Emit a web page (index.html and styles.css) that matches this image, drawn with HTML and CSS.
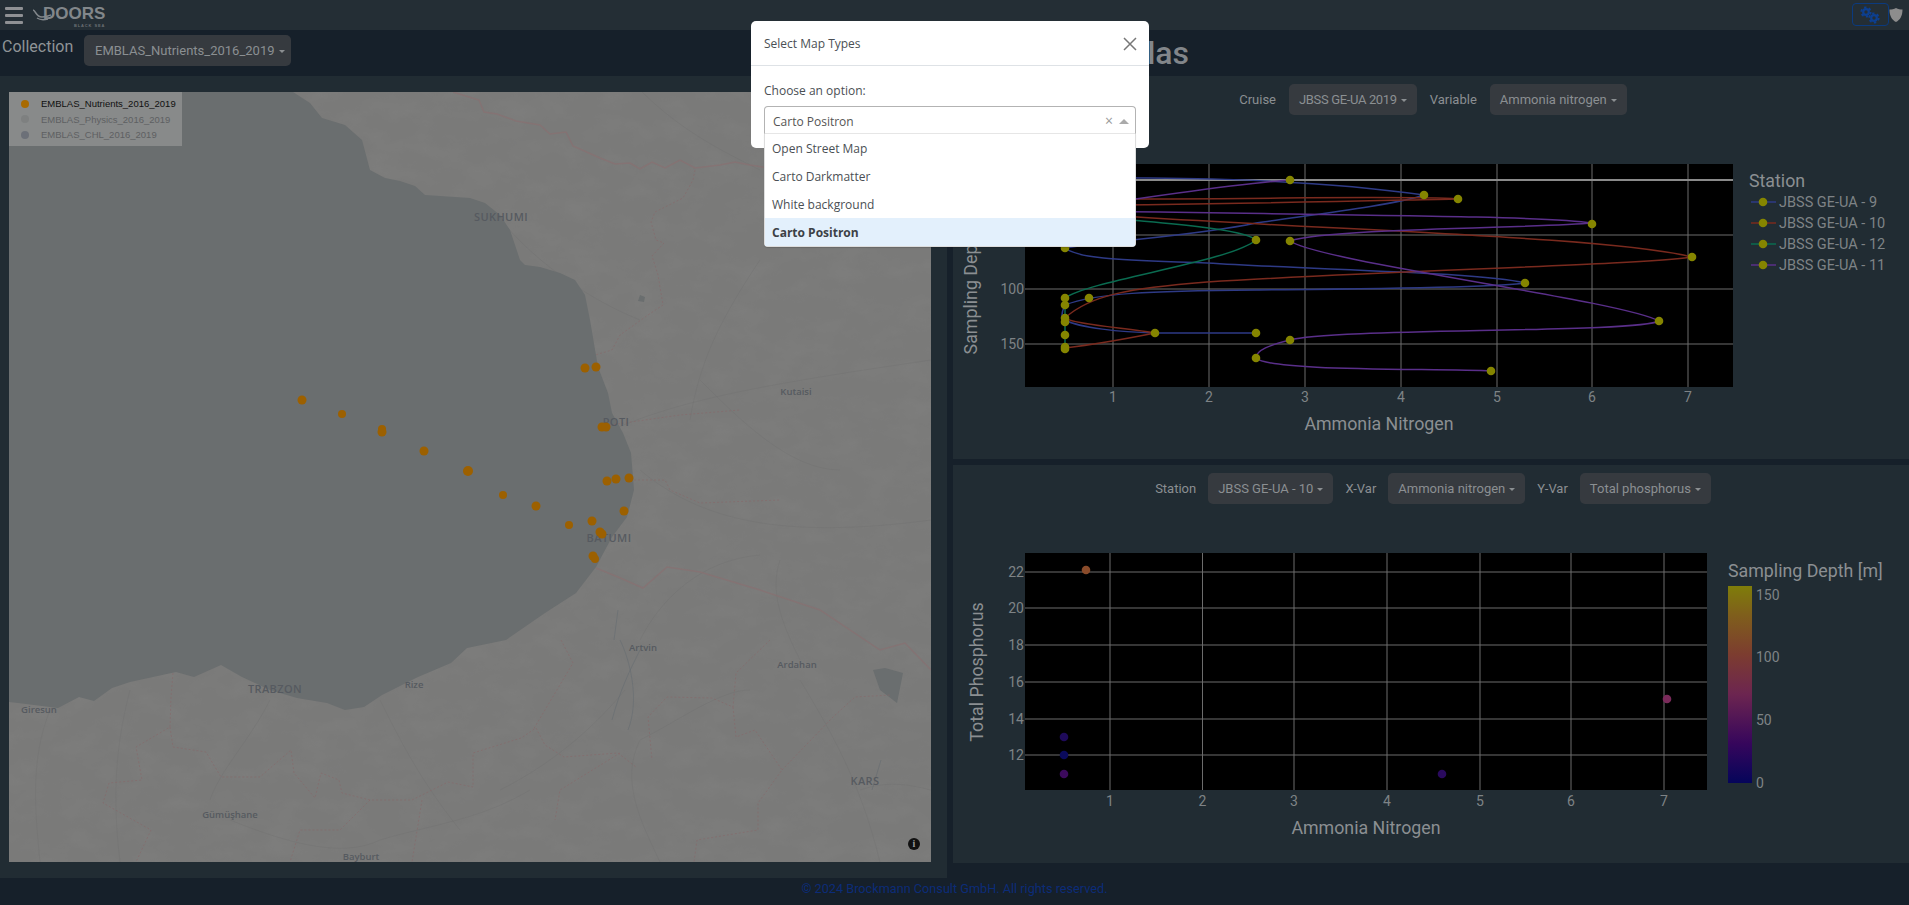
FILE: index.html
```html
<!DOCTYPE html>
<html lang="en">
<head>
<meta charset="utf-8">
<title>DOORS Black Sea</title>
<link rel="stylesheet" href="styles.css">
</head>
<body>
<nav class="navbar">
  <div class="menu-icon"><span></span><span></span><span></span></div>
  <div class="logo">
    <svg class="logo-swoosh" viewBox="0 0 18 14" width="18" height="14"><path d="M0 2 C3 3 3 9 9 9 C12 9 14 8 18 7 M4 10 C7 12 11 12 15 11"/></svg>
    <div class="logo-text"><span class="logo-name">DOORS</span><span class="logo-sub">BLACK SEA</span></div>
  </div>
  <div class="nav-right">
    <button class="gear-btn" aria-label="Settings">
      <svg viewBox="0 0 35 21" width="35" height="21">
        <g class="gear"><circle cx="13" cy="8" r="2.8"/><circle class="teeth" cx="13" cy="8" r="4.6"/></g>
        <g class="gear"><circle cx="21" cy="14" r="2.8"/><circle class="teeth" cx="21" cy="14" r="4.6"/></g>
      </svg>
    </button>
    <svg class="shield" viewBox="0 0 14 16" width="14" height="16"><path d="M7 1 C9 2 11.500 2.500 13.500 2.500 C13.500 9 11 13 7 15 C3 13 .5 9 .5 2.500 C2.500 2.500 5 2 7 1Z"/></svg>
  </div>
</nav>

<header class="page-head">
  <span class="collection-label">Collection</span>
  <button class="dd dd-collection">EMBLAS_Nutrients_2016_2019</button>
  <h2 class="title">Emblas</h2>
</header>

<main class="content">
  <section class="panel panel-map">
    <div class="map">
      <svg class="map-svg" viewBox="9 92 922 770" preserveAspectRatio="none">
        <defs>
          <filter id="terrain" x="0" y="0" width="100%" height="100%">
            <feTurbulence type="fractalNoise" baseFrequency="0.03 0.05" numOctaves="4" seed="7"/>
            <feColorMatrix type="matrix" values="0 0 0 0 .35  0 0 0 0 .35  0 0 0 0 .35  .8 0 0 0 -.3"/>
          </filter>
        </defs>
        <rect class="land" x="9" y="92" width="922" height="770"/>
        <rect class="terrain" x="9" y="92" width="922" height="770" filter="url(#terrain)"/>
        <path class="road" d="M505 225 C540 265 590 300 640 320 M640 90 C680 130 720 150 760 170 M760 260 C720 320 700 360 690 420 M612 430 C680 400 760 385 931 360 M700 380 C740 420 790 470 840 470 M640 470 C700 520 780 540 931 520 M640 640 C660 600 700 560 760 555 M625 690 C600 720 560 760 500 790 M380 700 C400 740 420 780 460 830 M270 700 C250 740 220 770 210 800 M50 710 C30 760 35 810 40 862 M130 690 C120 730 110 780 120 862 M800 660 C780 620 770 590 780 560 M800 680 C830 730 860 780 880 862 M660 862 C640 820 620 780 640 740 C680 720 720 690 750 690 M860 790 C890 780 910 785 931 790 M230 820 C280 840 340 860 380 840 C430 825 480 820 530 790"/>
        <path class="river" d="M618 610 L614 640 M620 640 C630 660 640 700 628 730 M881 760 L872 790 M640 650 C630 670 620 690 612 720"/>
        <path class="sea" d="M9 92 L293 92 L310 103 L322 118 L345 125 L362 140 L370 170 L385 178 L400 181 L415 186 L425 195 L440 196 L470 198 L485 203 L500 215 L510 230 L515 245 L520 260 L525 265 L540 267 L560 273 L575 280 L585 295 L590 320 L598 367 L608 393 L612 413 L623 433 L631 453 L634 490 L627 517 L612 537 L596 567 L576 593 L545 613 L506 640 L467 648 L451 663 L418 677 L382 695 L364 707 L345 710 L327 703 L297 698 L270 690 L242 677 L221 665 L194 677 L176 672 L130 682 L112 688 L94 701 L79 697 L58 708 L18 703 L9 702 Z"/>
        <path class="sea" d="M873 670 L885 668 L903 673 L897 703 L880 690Z M640 295 L645 297 L644 302 L638 301Z"/>
        <path class="border" d="M453 92 L479 100 L484 112 L497 114 L516 121 L540 125 L550 134 L566 132 L573 146 L600 158 L615 164 L630 163 L640 169 L652 162 L665 168 L680 160 L695 168 L720 165 L735 162 L750 165 L781 170 L830 150 L880 140 L931 120"/>
        <path class="border" d="M596 568 L618 577 L643 588 L667 567 L700 572 L760 590 L820 610 L880 650 L905 643 L931 670"/>
        <path class="dashed" d="M695 170 L693 180 L683 198 L655 212 L651 222 L656 240 L664 243 L652 256 L658 275 L663 305 L648 315 L620 335 L612 350 L595 355"/>
        <path class="dashed" d="M634 480 L665 480 L670 490 L700 503 L780 500 M610 425 L680 415 L740 410"/>
        <path class="dashed" d="M173 673 L171 697 L170 727 L136 747 L142 780 L109 783 L103 803 L151 830 L136 862"/>
        <path class="dashed" d="M170 727 L173 747 L206 752 L221 777 L260 777 L291 750 L294 773 L315 798 L321 773 L339 780 L342 793 L370 800 L412 800 L448 782 L473 787 L473 753 L521 738 L536 728 L545 745 L564 757 L618 753 L636 767"/>
        <path class="dashed" d="M561 640 L573 663 L533 730 M370 800 L340 830 L300 830 L290 862 M422 800 L412 862 M620 753 L560 790 L555 820"/>
        <path class="dashed" d="M770 640 L736 673 L733 707 L712 698 L667 697 L648 717 L652 760 M733 707 L736 737 L755 730 L782 770 L758 803 L758 830 L697 840 L694 862 M782 770 L833 717 L855 697 L891 695"/>
        <g class="map-label">
          <text class="label-big" x="501" y="221">SUKHUMI</text>
          <text class="label-big" x="616" y="426">POTI</text>
          <text class="label-big" x="609" y="542">BATUMI</text>
          <text class="label-big" x="275" y="693">TRABZON</text>
          <text class="label-big" x="865" y="785">KARS</text>
          <text x="796" y="395">Kutaisi</text>
          <text x="643" y="651">Artvin</text>
          <text x="797" y="668">Ardahan</text>
          <text x="414" y="688">Rize</text>
          <text x="39" y="713">Giresun</text>
          <text x="230" y="818">Gümüşhane</text>
          <text x="361" y="860">Bayburt</text>
        </g>
        <g class="station">
          <circle cx="585" cy="368" r="4.5"/><circle cx="596" cy="367" r="4.5"/><circle cx="302" cy="400" r="4.5"/>
          <circle cx="342" cy="414" r="4"/><circle cx="382" cy="429" r="4"/><circle cx="382" cy="432" r="4.5"/>
          <circle cx="424" cy="451" r="4.5"/><circle cx="468" cy="471" r="5"/><circle cx="602" cy="427" r="4.5"/>
          <circle cx="606" cy="427" r="4.5"/><circle cx="607" cy="481" r="4.5"/><circle cx="616" cy="479" r="4.5"/>
          <circle cx="629" cy="478" r="4.5"/><circle cx="503" cy="495" r="4"/><circle cx="536" cy="506" r="4.5"/>
          <circle cx="624" cy="511" r="4.5"/><circle cx="592" cy="521" r="4.5"/><circle cx="569" cy="525" r="4"/>
          <circle cx="600" cy="532" r="4.5"/><circle cx="602" cy="534" r="4.5"/><circle cx="593" cy="556" r="4.5"/>
          <circle cx="595" cy="559" r="4"/>
        </g>
      </svg>
      <ul class="map-legend">
        <li class="on"><i class="swatch swatch-nut"></i>EMBLAS_Nutrients_2016_2019</li>
        <li><i class="swatch swatch-phy"></i>EMBLAS_Physics_2016_2019</li>
        <li><i class="swatch swatch-chl"></i>EMBLAS_CHL_2016_2019</li>
      </ul>
      <span class="info-btn">i</span>
    </div>
  </section>

  <div class="right-col">
    <section class="panel panel-top">
      <div class="controls">
        <span>Cruise</span><button class="dd dd-cruise">JBSS GE-UA 2019</button>
        <span>Variable</span><button class="dd">Ammonia nitrogen</button>
      </div>
      <svg class="chart chart-top" viewBox="953 120 956 339" width="956" height="339">
        <rect class="plot-bg" x="1025" y="164" width="708" height="223"/>
        <g class="grid-v">
          <path d="M1113 164V387M1209 164V387M1305 164V387M1401 164V387M1497 164V387M1592 164V387M1688 164V387"/>
        </g>
        <g class="grid-h">
          <path class="zero" d="M1025 180H1733"/>
          <path d="M1025 235H1733M1025 289H1733M1025 344H1733"/>
        </g>
        <path class="ln ln-blue" d="M1030 178 C1150 177 1300 177 1424 195 C1395 205 1310 215 1256 223 C1200 235 1120 240 1065 248 C1080 260 1130 260 1207 263 C1320 270 1480 272 1525 283 C1500 288 1350 289 1256 290 C1150 291 1095 293 1065 305 C1060 315 1062 322 1065 320 C1080 328 1120 332 1155 333 L1256 333"/>
        <path class="ln ln-red" d="M1030 199 C1250 200 1400 195 1458 199 C1400 200 1250 204 1030 206 M1030 210 C1300 230 1600 235 1692 257 C1640 265 1400 270 1207 282 C1130 288 1090 295 1065 318 C1075 325 1130 328 1155 333 C1120 340 1090 345 1065 348"/>
        <path class="ln ln-green" d="M1030 212 C1190 224 1245 230 1256 240 C1230 262 1090 280 1065 298 L1065 348"/>
        <path class="ln ln-purple" d="M1030 215 C1190 190 1260 182 1290 180 M1030 210 C1300 215 1540 215 1592 223 C1540 228 1330 228 1290 241 C1320 262 1620 300 1659 321 C1640 333 1330 328 1290 340 C1270 345 1256 350 1256 358 C1270 372 1440 368 1491 371"/>
        <g class="dots">
          <circle cx="1290" cy="180" r="4.3"/><circle cx="1424" cy="195" r="4.3"/><circle cx="1458" cy="199" r="4.3"/>
          <circle cx="1592" cy="224" r="4.3"/><circle cx="1256" cy="240" r="4.3"/><circle cx="1290" cy="241" r="4.3"/>
          <circle cx="1065" cy="248" r="4.3"/><circle cx="1692" cy="257" r="4.3"/><circle cx="1525" cy="283" r="4.3"/>
          <circle cx="1065" cy="298" r="4.3"/><circle cx="1089" cy="298" r="4.3"/><circle cx="1065" cy="305" r="4.3"/>
          <circle cx="1065" cy="318" r="4.3"/><circle cx="1065" cy="322" r="4.3"/><circle cx="1155" cy="333" r="4.3"/>
          <circle cx="1256" cy="333" r="4.3"/><circle cx="1065" cy="335" r="4.3"/><circle cx="1290" cy="340" r="4.3"/>
          <circle cx="1065" cy="347" r="4.3"/><circle cx="1065" cy="349" r="4.3"/><circle cx="1256" cy="358" r="4.3"/>
          <circle cx="1659" cy="321" r="4.3"/><circle cx="1491" cy="371" r="4.3"/>
        </g>
        <g class="tick tick-x">
          <text x="1113" y="402">1</text><text x="1209" y="402">2</text><text x="1305" y="402">3</text><text x="1401" y="402">4</text><text x="1497" y="402">5</text><text x="1592" y="402">6</text><text x="1688" y="402">7</text>
        </g>
        <g class="tick tick-y">
          <text x="1024" y="294">100</text><text x="1024" y="349">150</text>
        </g>
        <text class="axis-title ta-mid" x="1379" y="430">Ammonia Nitrogen</text>
        <text class="axis-title ta-mid" transform="translate(977 277) rotate(-90)">Sampling Depth [m]</text>
        <text class="axis-title" x="1749" y="187">Station</text>
        <g class="legend-row">
          <path class="ln ln-blue" d="M1751 202H1776"/><circle class="dot" cx="1763" cy="202" r="4.3"/><text x="1779" y="207">JBSS GE-UA - 9</text>
          <path class="ln ln-red" d="M1751 223H1776"/><circle class="dot" cx="1763" cy="223" r="4.3"/><text x="1779" y="228">JBSS GE-UA - 10</text>
          <path class="ln ln-green" d="M1751 244H1776"/><circle class="dot" cx="1763" cy="244" r="4.3"/><text x="1779" y="249">JBSS GE-UA - 12</text>
          <path class="ln ln-purple" d="M1751 265H1776"/><circle class="dot" cx="1763" cy="265" r="4.3"/><text x="1779" y="270">JBSS GE-UA - 11</text>
        </g>
      </svg>
    </section>

    <section class="panel panel-bottom">
      <div class="controls controls-tight">
        <span>Station</span><button class="dd">JBSS GE-UA - 10</button>
        <span>X-Var</span><button class="dd">Ammonia nitrogen</button>
        <span>Y-Var</span><button class="dd">Total phosphorus</button>
      </div>
      <svg class="chart chart-bottom" viewBox="953 509 956 354" width="956" height="354">
        <defs>
          <linearGradient id="cbar" x1="0" y1="1" x2="0" y2="0">
            <stop offset="0" stop-color="#05055a"/>
            <stop offset=".2" stop-color="#36065c"/>
            <stop offset=".45" stop-color="#6c2550"/>
            <stop offset=".65" stop-color="#7c3c30"/>
            <stop offset=".85" stop-color="#7f5e1c"/>
            <stop offset="1" stop-color="#7f7d0a"/>
          </linearGradient>
        </defs>
        <rect class="plot-bg" x="1025" y="553" width="682" height="237"/>
        <g class="grid-v">
          <path d="M1110 553V790M1202.500 553V790M1294 553V790M1387 553V790M1480 553V790M1571 553V790M1664 553V790"/>
        </g>
        <g class="grid-h">
          <path d="M1025 572H1707M1025 608H1707M1025 645H1707M1025 682H1707M1025 719H1707M1025 755H1707"/>
        </g>
        <ellipse class="pt-a" cx="1086" cy="570" rx="4.3" ry="4.3"/>
        <ellipse class="pt-b" cx="1064" cy="737" rx="4.3" ry="4.3"/>
        <ellipse class="pt-c" cx="1064" cy="755" rx="4.3" ry="4.3"/>
        <ellipse class="pt-d" cx="1064" cy="774" rx="4.3" ry="4.3"/>
        <ellipse class="pt-e" cx="1442" cy="774" rx="4.3" ry="4.3"/>
        <ellipse class="pt-f" cx="1667" cy="699" rx="4.3" ry="4.3"/>
        <g class="tick tick-x">
          <text x="1110" y="806">1</text><text x="1202.500" y="806">2</text><text x="1294" y="806">3</text><text x="1387" y="806">4</text><text x="1480" y="806">5</text><text x="1571" y="806">6</text><text x="1664" y="806">7</text>
        </g>
        <g class="tick tick-y">
          <text x="1024" y="577">22</text><text x="1024" y="613">20</text><text x="1024" y="650">18</text><text x="1024" y="687">16</text><text x="1024" y="724">14</text><text x="1024" y="760">12</text>
        </g>
        <text class="axis-title ta-mid" x="1366" y="834">Ammonia Nitrogen</text>
        <text class="axis-title ta-mid" transform="translate(983 672) rotate(-90)">Total Phosphorus</text>
        <text class="axis-title" x="1728" y="577">Sampling Depth [m]</text>
        <rect x="1728" y="586" width="24" height="197" fill="url(#cbar)"/>
        <g class="tick">
          <text x="1756" y="600">150</text><text x="1756" y="662">100</text><text x="1756" y="725">50</text><text x="1756" y="788">0</text>
        </g>
      </svg>
    </section>
  </div>
</main>

<footer class="footer">© 2024 Brockmann Consult GmbH. All rights reserved.</footer>

<div class="modal" role="dialog">
  <div class="modal-head">
    <span>Select Map Types</span>
    <svg class="modal-close" viewBox="0 0 14 14" width="14" height="14"><path d="M1 1L13 13M13 1L1 13"/></svg>
  </div>
  <div class="modal-body">
    <div class="field-label">Choose an option:</div>
    <div class="select">
      <div class="select-value">
        <span>Carto Positron</span>
        <span class="select-clear">×</span>
        <span class="select-arrow"></span>
      </div>
      <ul class="select-menu">
        <li>Open Street Map</li>
        <li>Carto Darkmatter</li>
        <li>White background</li>
        <li class="selected">Carto Positron</li>
      </ul>
    </div>
  </div>
</div>
</body>
</html>
```
FILE: styles.css
```css
* { box-sizing: border-box; }
html, body { margin: 0; padding: 0; }
body {
  width: 1909px;
  height: 905px;
  overflow: hidden;
  position: relative;
  display: flex;
  flex-direction: column;
  background: #16202a;
  font-family: Roboto, "Liberation Sans", sans-serif;
  font-size: 13px;
  color: #8b8f92;
}
button { font: inherit; }

/* navbar */
.navbar {
  height: 30px;
  flex: none;
  background: #242e35;
  display: flex;
  align-items: center;
  padding: 0 6px 0 5px;
}
.menu-icon { width: 18px; display: flex; flex-direction: column; gap: 4px; }
.menu-icon span { height: 3px; background: #8f9194; border-radius: 1px; }
.logo { display: flex; align-items: flex-start; margin-left: 10px; height: 26px; color: #82878b; }
.logo-swoosh { fill: none; stroke: #82878b; stroke-width: 1.500; margin: 6px -8px 0 0; }
.logo-text { display: flex; flex-direction: column; align-items: flex-end; }
.logo-name { font: 700 17px/15px "Liberation Sans", sans-serif; margin-top: 4px; }
.logo-sub { font: 700 4px/5px "Liberation Sans", sans-serif; letter-spacing: .9px; margin-top: 2px; color: #6b7074; }
.nav-right { margin-left: auto; display: flex; align-items: center; gap: 0; }
.gear-btn {
  width: 37px; height: 23px; padding: 0; margin-top: -1px;
  background: none; border: 1px solid #0b3a7e; border-radius: 4px;
  display: flex; align-items: center; justify-content: center;
}
.gear circle { fill: none; stroke: #0d3f8f; stroke-width: 2.200; }
.gear .teeth { stroke-width: 2; stroke-dasharray: 2.4 2.4; }
.shield { fill: #8d8d8d; margin-top: 0; }

/* header */
.page-head {
  height: 46px;
  flex: none;
  display: flex;
  align-items: flex-start;
  padding: 5px 0 0 2px;
}
.collection-label { font-size: 16px; line-height: 24px; color: #8f9497; width: 82px; }
.dd {
  height: 31px;
  padding: 0 10px;
  background: #363a3f;
  color: #8b8f92;
  border: 0;
  border-radius: 5px;
  font-size: 13px;
  white-space: nowrap;
}
.dd::after {
  content: "";
  display: inline-block;
  margin-left: 4px;
  vertical-align: 2px;
  border-top: 3px solid;
  border-left: 3px solid transparent;
  border-right: 3px solid transparent;
}
.dd-collection { width: 207px; padding: 0 0 0 11px; text-align: left; }
.dd-cruise { letter-spacing: -.35px; }
.title { width: 898px; margin: -2px 0 0; text-align: right; font-size: 32px; line-height: 40px; font-weight: 500; color: #82868a; }

/* layout */
.content { flex: 1; display: grid; grid-template-columns: 947px 956px; column-gap: 6px; min-height: 0; }
.panel { background: #212c33; }
.panel-map { padding: 16px 16px 16px 9px; }
.map { position: relative; width: 922px; height: 770px; overflow: hidden; }
.map-svg { display: block; width: 922px; height: 770px; }
.right-col { display: flex; flex-direction: column; gap: 6px; height: 787px; }
.panel-top { height: 383px; }
.panel-bottom { height: 398px; }
.controls { display: flex; justify-content: center; align-items: center; gap: 13px; height: 31px; margin: 8px 0 5px; padding-left: 4px; color: #8b8f92; }
.controls-tight { gap: 12px; }
.chart { display: block; }

/* map */
.land { fill: #7a7a79; }
.terrain { opacity: .22; }
.sea { fill: #6a6e6f; }
.road { fill: none; stroke: #6e6e6e; stroke-width: 1; opacity: .3; }
.river { fill: none; stroke: #626a70; stroke-width: 1; opacity: .5; }
.border { fill: none; stroke: #8a6e70; stroke-width: 1.500; opacity: .6; }
.dashed { fill: none; stroke: #86686a; stroke-width: 1; stroke-dasharray: 2 2; opacity: .65; }
.map-label text { font: 600 9.500px "Open Sans", sans-serif; fill: #565a60; text-anchor: middle; }
.map-label .label-big { font-size: 11px; letter-spacing: .4px; }
.station circle { fill: #9c6000; }
.map-legend {
  position: absolute; left: 0; top: 0; width: 173px; height: 54px;
  margin: 0; padding: 4px 0 0 12px; list-style: none;
  background: #888a8a; color: #5e6062;
  font: 9.500px/15.500px "Liberation Sans", sans-serif;
}
.map-legend li { display: flex; align-items: center; white-space: nowrap; }
.map-legend .on { color: #101010; }
.swatch { width: 8px; height: 8px; border-radius: 50%; margin-right: 12px; flex: none; }
.swatch-nut { background: #a86a00; }
.swatch-phy { background: #7e8080; }
.swatch-chl { background: #6c7078; }
.info-btn {
  position: absolute; right: 11px; bottom: 12px; width: 12px; height: 12px;
  border-radius: 50%; background: #111; color: #9a9a9a;
  font: 700 10px/12px "Liberation Serif", serif; text-align: center;
}

/* charts */
.plot-bg { fill: #000; }
.grid-v path { fill: none; stroke: #6c6c6c; stroke-width: 1; }
.grid-h path { fill: none; stroke: #6c6c6c; stroke-width: 1.200; }
.grid-h .zero { stroke: #8a8a8a; stroke-width: 2; }
.ln { fill: none; stroke-width: 1.500; }
.ln-blue { stroke: #2e3a86; }
.ln-red { stroke: #7a2a1e; }
.ln-green { stroke: #0a6b50; }
.ln-purple { stroke: #5a2f8a; }
.dots circle, .dot { fill: #858500; }
.tick text { font: 14px Roboto, sans-serif; fill: #7e8386; }
.tick-x text { text-anchor: middle; }
.tick-y text { text-anchor: end; }
.axis-title { font: 17.800px Roboto, sans-serif; fill: #8b8f92; }
.ta-mid { text-anchor: middle; }
.legend-row text { font: 14.500px Roboto, sans-serif; fill: #7e8386; }
.pt-a { fill: #8a4b2a; }
.pt-b { fill: #1e0a5a; }
.pt-c { fill: #0a0a5c; }
.pt-d { fill: #3c0a5c; }
.pt-e { fill: #2a0a5e; }
.pt-f { fill: #7a2a5a; }

/* footer */
.footer { height: 27px; flex: none; display: flex; align-items: center; justify-content: center; padding-bottom: 6px; color: #0c2c78; font-size: 12.700px; }

/* modal */
.modal {
  position: absolute; left: 751px; top: 21px; width: 398px; height: 127px;
  background: #fff; border-radius: 5px;
  font-family: "Open Sans", "Noto Sans", sans-serif; font-size: 12px; color: #4a4f54;
}
.modal-head {
  height: 45px; display: flex; align-items: center; justify-content: space-between;
  padding: 1px 12px 0 13px; border-bottom: 1px solid #dee2e6;
}
.modal-close { fill: none; stroke: #777; stroke-width: 1.500; }
.modal-body { padding: 17px 13px 0; }
.field-label { line-height: 16px; margin-bottom: 7px; }
.select { position: relative; height: 28px; }
.select-value {
  height: 28px; display: flex; align-items: center; padding: 2px 6px 0 8px;
  border: 1px solid #b3b3b3; border-radius: 4px 4px 0 0; border-bottom-color: #e6e6e6;
  background: #fff; color: #555;
}
.select-value span:first-child { flex: 1; }
.select-clear { color: #999; font-size: 14px; margin-right: 6px; line-height: 1; }
.select-arrow { border-bottom: 5px solid #aaa; border-left: 5px solid transparent; border-right: 5px solid transparent; }
.select-menu {
  position: absolute; left: 0; right: 0; top: 28px; margin: 0; padding: 0; list-style: none;
  background: #fff; border: 1px solid #ddd; border-top: 0; border-radius: 0 0 4px 4px;
  box-shadow: 0 1px 1px rgba(0,0,0,.15);
}
.select-menu li { height: 28px; line-height: 30px; padding: 0 7px; color: #4a4f54; }
.select-menu .selected { background: #e3f0fc; font-weight: 700; color: #3c4146; }
```
